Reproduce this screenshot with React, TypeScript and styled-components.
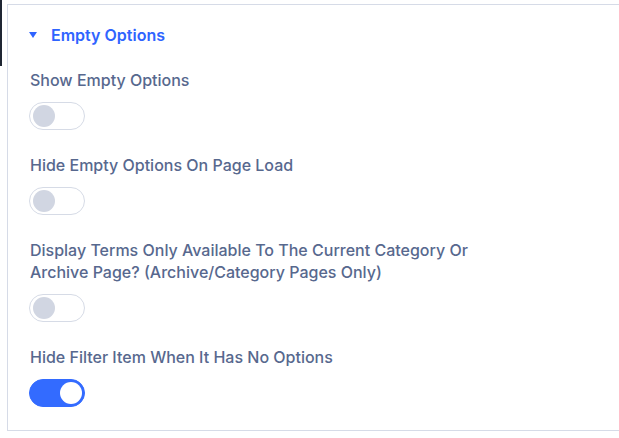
import styled, { createGlobalStyle } from "styled-components";

const GlobalStyle = createGlobalStyle`
  html, body {
    margin: 0;
    padding: 0;
    background: #ffffff;
    font-family: Inter, "Noto Sans", sans-serif;
  }
`;

const Page = styled.div`
  display: flex;
  align-items: flex-start;
  gap: 5px;
  width: 619px;
  height: 438px;
  overflow: hidden;
`;

const EdgeStrip = styled.div`
  width: 2px;
  height: 66px;
  background: #1f2633;
  flex-shrink: 0;
`;

const Panel = styled.section`
  flex: 1;
  margin-top: 4px;
  height: 427px;
  box-sizing: border-box;
  border-top: 1px solid #d6dbe7;
  border-left: 1px solid #d6dbe7;
  border-bottom: 1px solid #d6dbe7;
  padding: 19px 0 0 22px;
  display: flex;
  flex-direction: column;
`;

const SectionHeader = styled.button`
  display: flex;
  align-items: center;
  gap: 14px;
  border: none;
  background: none;
  padding: 0;
  margin: 0 0 23px -1px;
  height: 22px;
  font-family: inherit;
  font-size: 16px;
  font-weight: 600;
  color: #2f64ff;
  cursor: pointer;
`;

const Caret = styled.span`
  width: 0;
  height: 0;
  border-left: 4.5px solid transparent;
  border-right: 4.5px solid transparent;
  border-top: 6px solid #2f64ff;
`;

const OptionList = styled.div`
  display: flex;
  flex-direction: column;
  gap: 24px;
`;

const Option = styled.div`
  display: flex;
  flex-direction: column;
  align-items: flex-start;
  gap: 11px;
`;

const Label = styled.label`
  max-width: 470px;
  font-size: 16px;
  line-height: 22px;
  font-weight: 500;
  color: #57688e;
`;

const Toggle = styled.span<{ $on: boolean }>`
  position: relative;
  display: inline-block;
  box-sizing: border-box;
  width: 56px;
  height: 28px;
  border-radius: 14px;
  border: 1px solid ${(p) => (p.$on ? "#336bff" : "#d6dbe6")};
  background: ${(p) => (p.$on ? "#336bff" : "#ffffff")};
  margin-left: -1px;

  &::after {
    content: "";
    position: absolute;
    top: 2px;
    left: ${(p) => (p.$on ? "30px" : "3px")};
    width: 22px;
    height: 22px;
    border-radius: 50%;
    background: ${(p) => (p.$on ? "#ffffff" : "#d1d6e2")};
  }
`;

const options = [
  { label: "Show Empty Options", on: false },
  { label: "Hide Empty Options On Page Load", on: false },
  {
    label:
      "Display Terms Only Available To The Current Category Or Archive Page? (Archive/Category Pages Only)",
    on: false,
  },
  { label: "Hide Filter Item When It Has No Options", on: true },
];

export default function App() {
  return (
    <>
      <GlobalStyle />
      <Page>
        <EdgeStrip />
        <Panel>
          <SectionHeader>
            <Caret />
            Empty Options
          </SectionHeader>
          <OptionList>
            {options.map((o) => (
              <Option key={o.label}>
                <Label>{o.label}</Label>
                <Toggle $on={o.on} />
              </Option>
            ))}
          </OptionList>
        </Panel>
      </Page>
    </>
  );
}
